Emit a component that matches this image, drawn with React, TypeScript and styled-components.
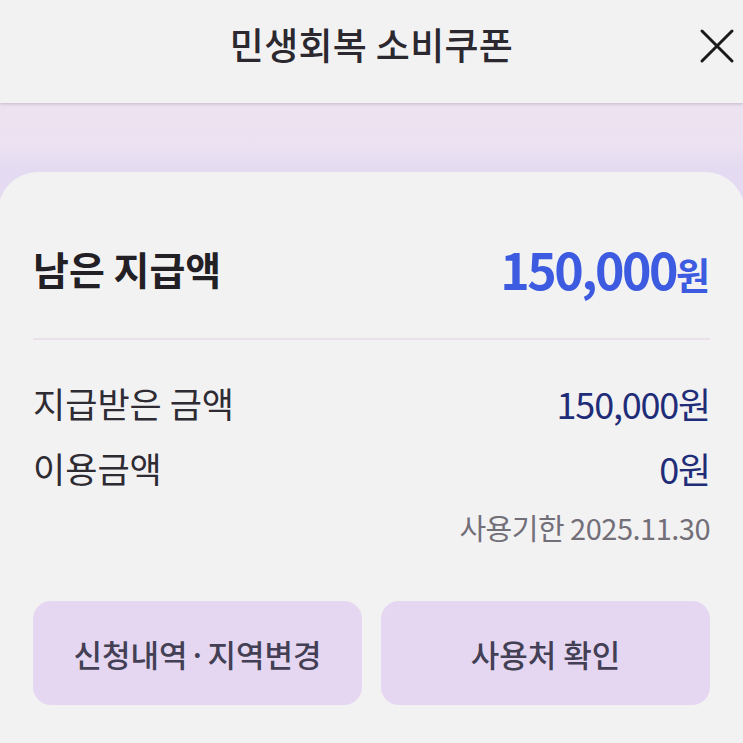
import React from "react";
import styled, { createGlobalStyle } from "styled-components";

type Row = { label: string; value: string };

const rows: Row[] = [
  { label: "지급받은 금액", value: "150,000" },
  { label: "이용금액", value: "0" },
];

const GlobalStyle = createGlobalStyle`
  html, body {
    margin: 0;
    padding: 0;
    background: #f3f2f3;
    font-family: "Noto Sans CJK KR", "Noto Sans", sans-serif;
  }
`;

const App: React.FC = () => {
  return (
    <Page>
      <GlobalStyle />
      <Header>
        <HeaderTitle>민생회복 소비쿠폰</HeaderTitle>
        <CloseButton aria-label="닫기">
          <svg width="36" height="36" viewBox="0 0 36 36" fill="none" stroke="#1a1a1a" strokeWidth="3" strokeLinecap="round">
            <path d="M3 3L33 33M33 3L3 33" />
          </svg>
        </CloseButton>
      </Header>
      <Band>
        <Card>
          <Summary>
            <SummaryLabel>남은 지급액</SummaryLabel>
            <SummaryValue>
              150,000<small>원</small>
            </SummaryValue>
          </Summary>
          <Divider />
          <Details>
            {rows.map((r) => (
              <DetailRow key={r.label}>
                <DetailLabel>{r.label}</DetailLabel>
                <DetailValue>{r.value}원</DetailValue>
              </DetailRow>
            ))}
          </Details>
          <Expiry>사용기한 2025.11.30</Expiry>
          <Actions>
            <ActionButton>
              신청내역<Dot>·</Dot>지역변경
            </ActionButton>
            <ActionButton>사용처 확인</ActionButton>
          </Actions>
        </Card>
      </Band>
    </Page>
  );
};

export default App;

/* ----- styles ----- */
const Page = styled.div`
  width: 743px;
  height: 743px;
  overflow: hidden;
  background: #f3f2f3;
  display: flex;
  flex-direction: column;
`;

const Header = styled.header`
  position: relative;
  height: 103px;
  flex-shrink: 0;
  display: flex;
  align-items: flex-start;
  justify-content: center;
  background: #f3f2f3;
  box-shadow: 0 1px 3px rgba(120, 100, 140, 0.35);
  z-index: 1;
`;

const HeaderTitle = styled.h1`
  margin: 14px 0 0;
  font-size: 37px;
  line-height: 60px;
  font-weight: 500;
  color: #2b2830;
  letter-spacing: 0.3px;
`;

const CloseButton = styled.button`
  position: absolute;
  right: 6px;
  top: 26px;
  width: 40px;
  height: 40px;
  padding: 0;
  border: none;
  background: none;
  display: flex;
  align-items: center;
  justify-content: center;
`;

const Band = styled.section`
  flex: 1;
  padding-top: 69px;
  background: linear-gradient(180deg, #ede3f0 0px, #ebe2f2 40px, #e4daf1 69px, #e4daf1 100%);
  display: flex;
  flex-direction: column;
`;

const Card = styled.div`
  flex: 1;
  margin: 0 -2px;
  padding: 58px 35px 0;
  background: #f3f2f3;
  border-radius: 40px 40px 0 0;
  display: flex;
  flex-direction: column;
`;

const Summary = styled.div`
  display: flex;
  justify-content: space-between;
  align-items: center;
  height: 76px;
`;

const SummaryLabel = styled.div`
  font-size: 39px;
  font-weight: 700;
  color: #222025;
  letter-spacing: 0;
`;

const SummaryValue = styled.div`
  font-size: 50px;
  font-weight: 700;
  color: #3d5be0;
  letter-spacing: -2.5px;

  small {
    font-size: 37px;
    letter-spacing: 0;
  }
`;

const Divider = styled.hr`
  margin: 32px 0 0;
  border: none;
  height: 2px;
  background: #e9e0ea;
`;

const Details = styled.div`
  margin-top: 40px;
  display: flex;
  flex-direction: column;
  gap: 20px;
`;

const DetailRow = styled.div`
  display: flex;
  justify-content: space-between;
  align-items: center;
  height: 45px;
`;

const DetailLabel = styled.span`
  font-size: 35px;
  font-weight: 400;
  color: #2e2b33;
  letter-spacing: 0;
`;

const DetailValue = styled.span`
  font-size: 36px;
  font-weight: 400;
  color: #1f2d78;
  letter-spacing: -1.2px;
`;

const Expiry = styled.div`
  margin-top: 16px;
  text-align: right;
  font-size: 29px;
  color: #726f78;
  letter-spacing: -0.5px;
`;

const Actions = styled.div`
  margin-top: 53px;
  display: grid;
  grid-template-columns: 1fr 1fr;
  gap: 19px;
`;

const ActionButton = styled.button`
  height: 104px;
  border: none;
  border-radius: 18px;
  background: #e5d7f1;
  font-family: inherit;
  font-size: 31px;
  font-weight: 500;
  color: #433f55;
  letter-spacing: 0;
`;

const Dot = styled.span`
  margin: 0 1px;
`;
